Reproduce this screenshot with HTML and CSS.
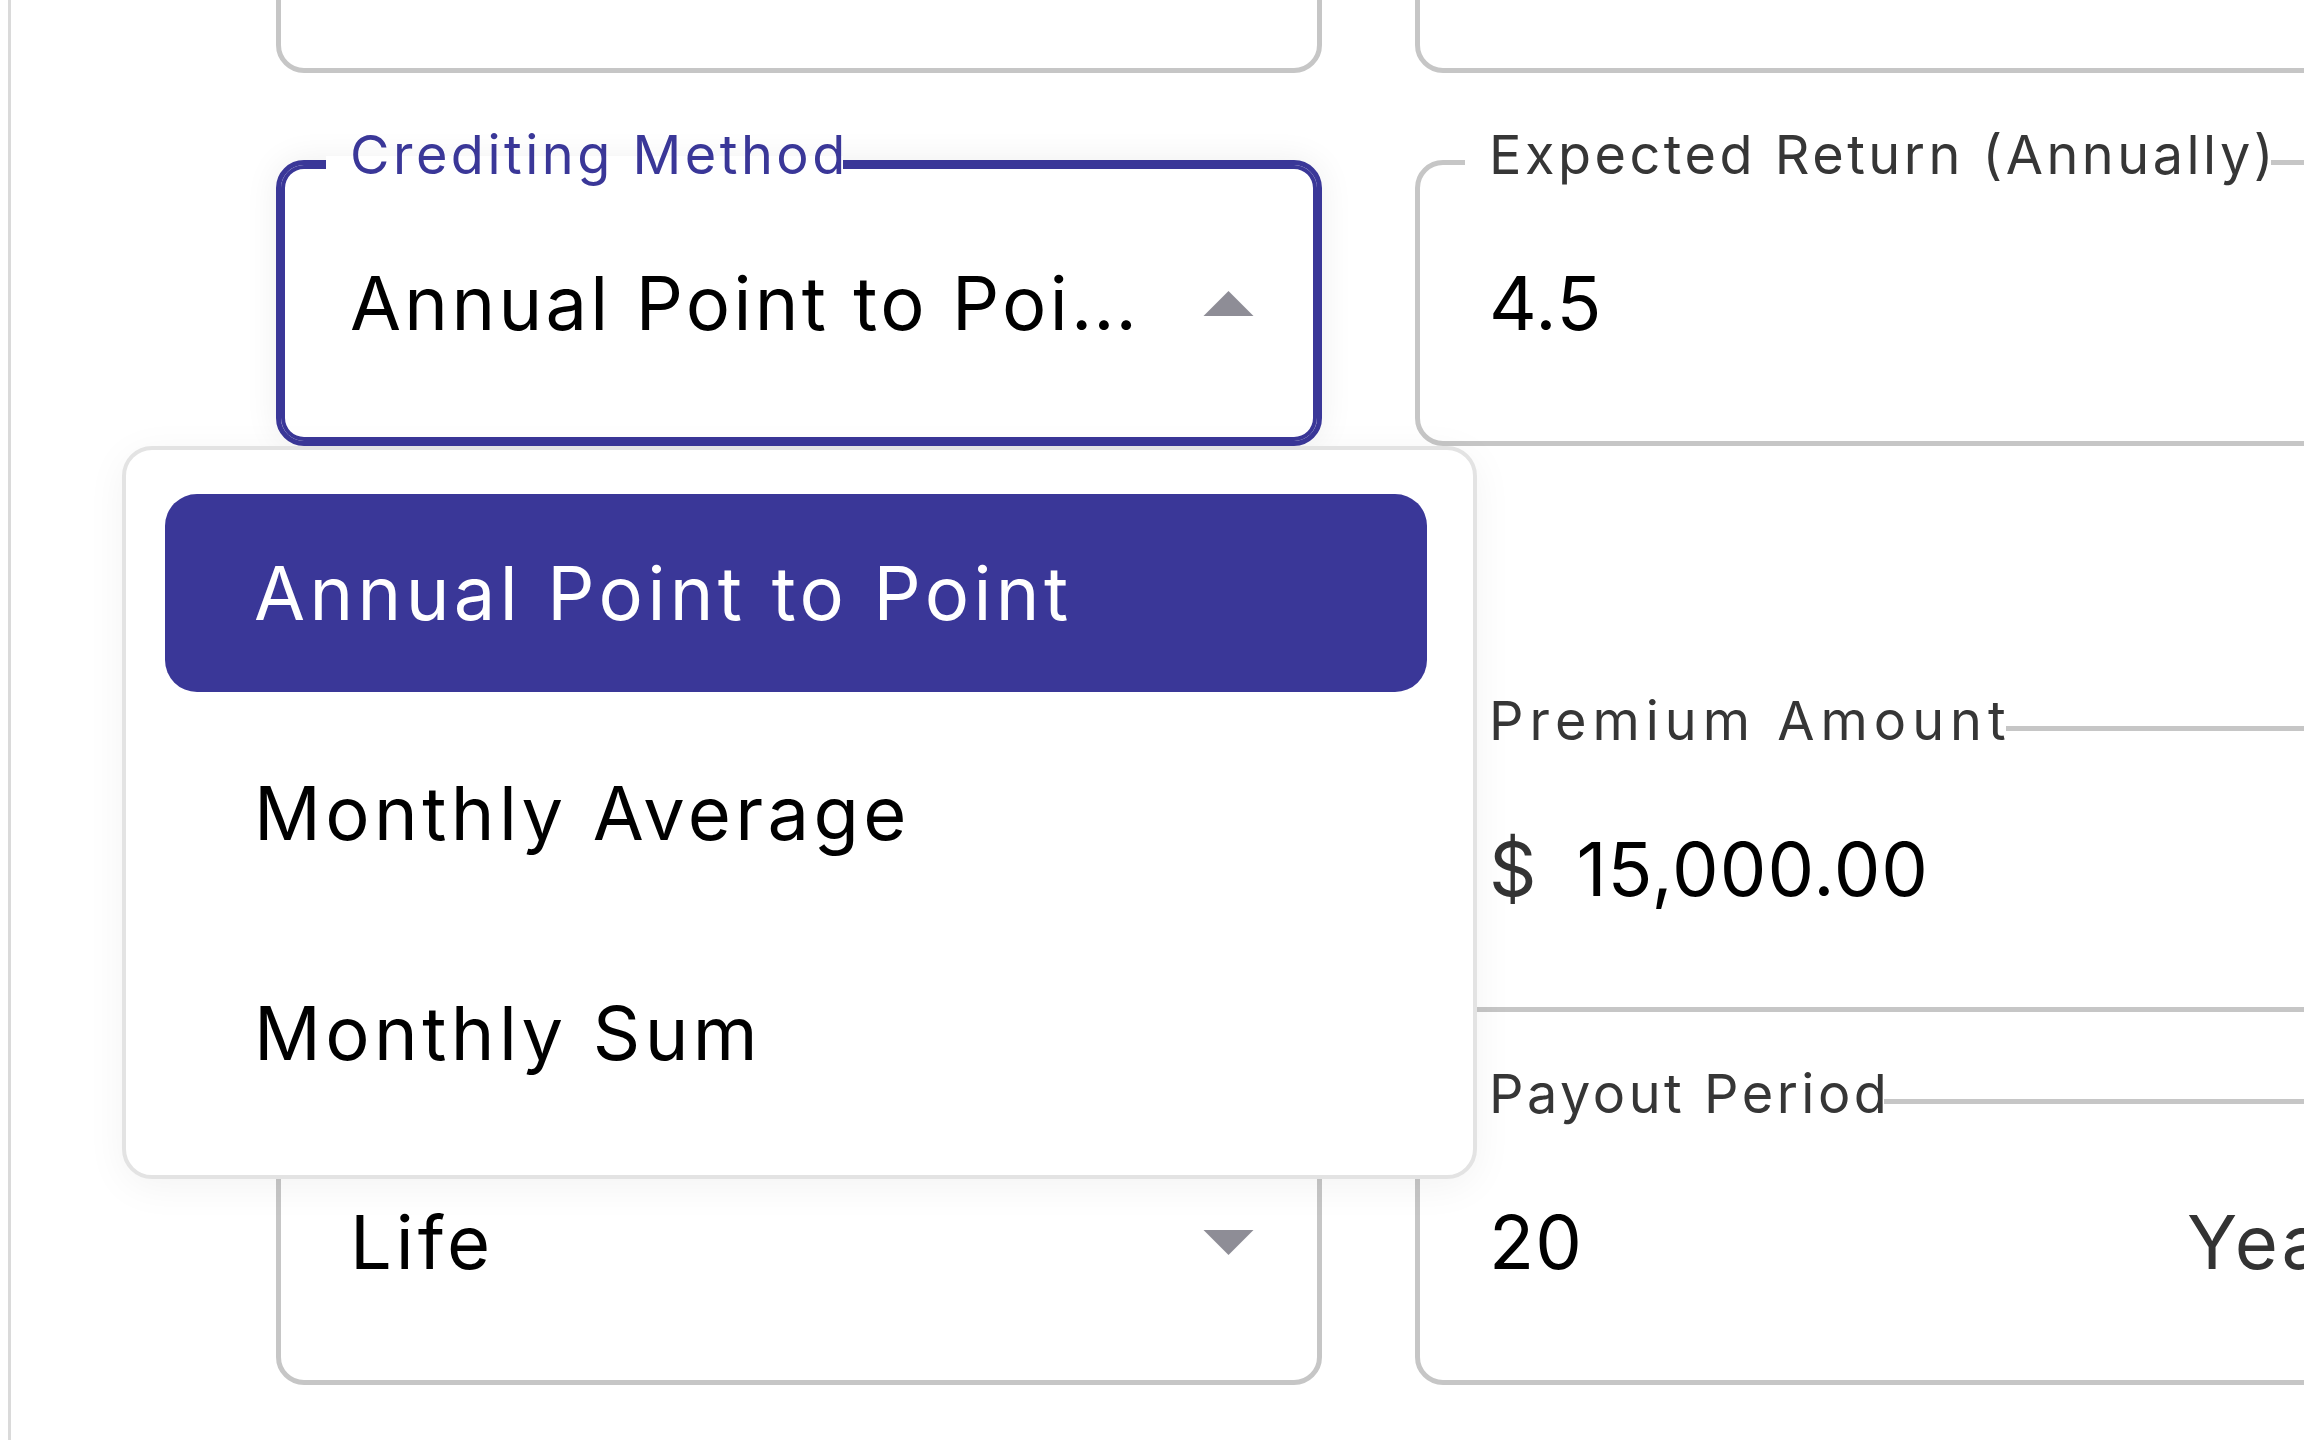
FILE: index.html
```html
<!DOCTYPE html>
<html lang="en">
<head>
<meta charset="utf-8">
<title>Annuity Calculator</title>
<link rel="stylesheet" href="styles.css">
</head>
<body>
<div class="app">
  <aside class="rail"></aside>
  <main class="form">
    <div class="row">
      <div class="field"></div>
      <div class="field"></div>
    </div>

    <div class="row">
      <div class="field field-select focused">
        <label class="label label-focused">Crediting Method</label>
        <div class="value value-tight">Annual Point to Poi<span class="dots">...</span></div>
        <svg class="arrow" viewBox="0 0 50 25" width="51" height="25" aria-hidden="true"><polygon points="0,25 25,0 50,25"/></svg>
        <div class="menu" role="listbox">
          <div class="option selected" role="option">Annual Point to Point</div>
          <div class="option" role="option">Monthly Average</div>
          <div class="option" role="option">Monthly Sum</div>
        </div>
      </div>
      <div class="field">
        <label class="label">Expected Return (Annually)</label>
        <div class="value num">4.5</div>
      </div>
    </div>

    <div class="row row-spaced">
      <div class="field"></div>
      <div class="field">
        <label class="label label-wide">Premium Amount</label>
        <span class="adorn">$</span>
        <div class="value num">15,000.00</div>
      </div>
    </div>

    <div class="row">
      <div class="field field-select">
        <div class="value">Life</div>
        <svg class="arrow" viewBox="0 0 50 25" width="51" height="25" aria-hidden="true"><polygon points="0,0 50,0 25,25"/></svg>
      </div>
      <div class="field">
        <label class="label">Payout Period</label>
        <div class="value num">20</div>
        <span class="adorn adorn-end">Years</span>
      </div>
    </div>
  </main>
</div>
</body>
</html>
```
FILE: styles.css
```css
* { box-sizing: border-box; }

html, body {
  margin: 0;
  height: 100%;
  background: #ffffff;
  overflow: hidden;
}

body {
  font-family: "Inter", "Noto Sans", sans-serif;
  color: #000;
}

.app {
  display: flex;
  height: 1440px;
  overflow: hidden;
}

.rail {
  flex: 0 0 3px;
  margin-left: 8px;
  background: #dadada;
}

.form {
  display: flex;
  flex-direction: column;
  gap: 87px;
  margin-top: -213px;
  padding-left: 265px;
}

.row {
  display: grid;
  grid-template-columns: 1046px 1046px;
  column-gap: 93px;
}

.row-spaced {
  margin-top: 193px;
}

.field {
  position: relative;
  height: 286px;
  border: 5px solid #c6c6c6;
  border-radius: 28px;
  background: #fff;
  display: flex;
  align-items: center;
  padding: 0 69px;
}

.field-select {
  padding-right: 63px;
}

.field.focused {
  border-color: #3a3798;
  box-shadow: inset 0 0 0 4px #3a3798, 0 0 34px rgba(0, 0, 0, 0.07);
}

.label {
  position: absolute;
  left: 69px;
  top: -37px;
  z-index: 1;
  font-size: 54px;
  line-height: 54px;
  letter-spacing: 3.5px;
  color: #363636;
  white-space: nowrap;
}

.label::before {
  content: "";
  position: absolute;
  left: -24px;
  right: 6px;
  top: 28px;
  height: 17px;
  background: #fff;
  z-index: -1;
}

.label-wide {
  letter-spacing: 6px;
}

.label-focused {
  color: #3a3798;
}

.value {
  font-size: 74px;
  line-height: 74px;
  letter-spacing: 4px;
  color: #000;
  white-space: nowrap;
}

.value-tight {
  letter-spacing: 3.3px;
}

.dots {
  letter-spacing: 1px;
}

.value.num {
  letter-spacing: 1px;
}

.adorn {
  font-size: 74px;
  line-height: 74px;
  color: #333;
  margin-right: 40px;
}

.adorn-end {
  margin-right: -12px;
  margin-left: auto;
  letter-spacing: 3px;
}

.arrow {
  margin-left: auto;
  fill: #8e8d96;
  flex: 0 0 auto;
}

.menu {
  position: absolute;
  left: -159px;
  top: calc(100% + 5px);
  width: 1355px;
  z-index: 10;
  display: flex;
  flex-direction: column;
  gap: 22px;
  padding: 44px 46px 43px 39px;
  background: #fff;
  border: 4px solid #e3e3e3;
  border-radius: 30px;
  box-shadow: 0 8px 40px rgba(0, 0, 0, 0.05);
}

.option {
  height: 198px;
  border-radius: 32px;
  display: flex;
  align-items: center;
  padding-left: 89px;
  font-size: 74px;
  line-height: 74px;
  letter-spacing: 4.4px;
  color: #000;
  white-space: nowrap;
}

.option.selected {
  background: #3a3798;
  color: #fff;
}
```
